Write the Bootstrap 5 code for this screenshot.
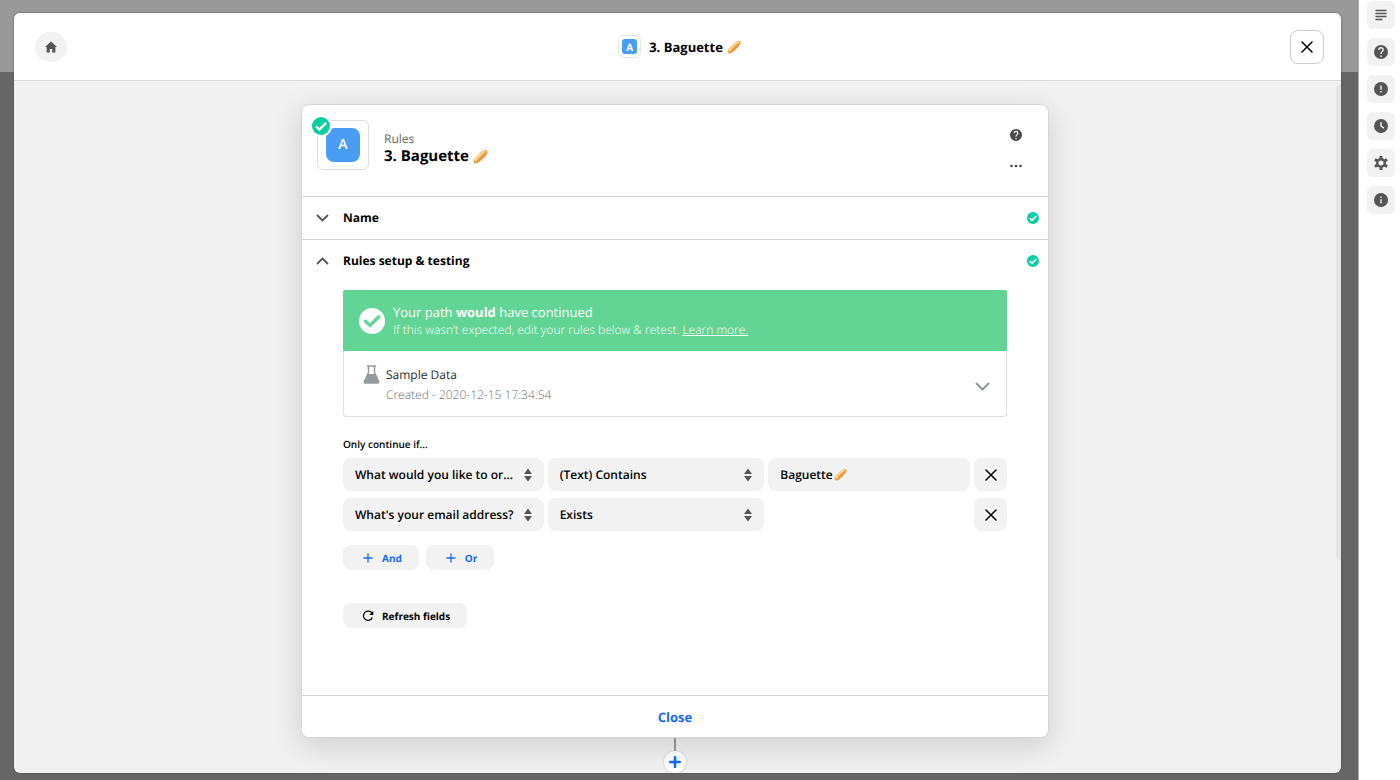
<!DOCTYPE html>
<html lang="en">
<head>
<meta charset="utf-8">
<meta name="viewport" content="width=device-width, initial-scale=1">
<title>3. Baguette – Rules</title>
<link href="https://cdn.jsdelivr.net/npm/bootstrap@5.3.0/dist/css/bootstrap.min.css" rel="stylesheet">
<style>
  body { font-family: "Open Sans", sans-serif; font-size: 12px; line-height: 18px; color: #000; background: #fff; text-rendering: geometricPrecision; }
  button, select, input { text-rendering: inherit; }
  svg { display: block; flex: none; }
  .btn { --bs-btn-font-family: inherit; --bs-btn-border-width: 0; }
  .backdrop-area { padding: 13px 17px 7px 14px; background: linear-gradient(#999 72px, #666 72px); border-right: 1px solid #aaa; min-width: 0; }
  .editor { background: #f1f1f1; border-radius: 6px; box-shadow: 0 0 2px #444; overflow: hidden; }
  .editor-head { height: 68px; padding: 0 17px 0 21px; background: #fff; border-bottom: 1px solid #d9d9d9; }
  .head-side { flex: 1 1 0; }
  .home-btn { width: 32px; height: 30px; padding: 0; border-radius: 15px; background: #f2f2f2; color: #555; }
  .app-mini { width: 23px; height: 23px; border: 1px solid #e6e6e6; border-radius: 6px; }
  .app-mini span { width: 15px; height: 15px; border-radius: 3px; background: #499df3; color: #fff; font-size: 10px; font-weight: 700; }
  .head-title { font-size: 13px; font-weight: 700; line-height: 20px; margin: 0; }
  .close-btn { width: 34px; height: 34px; padding: 0; border: 1px solid #ccc; border-radius: 8px; background: #fff; }
  .canvas-body { padding-top: 23px; min-width: 0; }
  .scroll-thumb { width: 5px; height: 475px; margin-top: 4px; background: #e5e5e5; border-radius: 3px 0 0 3px; flex: none; }
  .step { width: 100%; max-width: 748px; border: 1px solid #d6d6d6; border-radius: 8px; box-shadow: 0 8px 30px rgba(0,0,0,.15); --bs-card-bg: #fff; color: #000; }
  .step-head { height: 92px; padding: 15px; border-bottom: 1px solid #d6d6d6; }
  .app-box { width: 52px; height: 50px; border: 1px solid #ddd; border-radius: 6px; }
  .app-logo { width: 34px; height: 34px; border-radius: 8px; background: #499df3; color: #fff; font-size: 14px; font-weight: 600; }
  .app-done { position: absolute; left: -8px; top: -6px; }
  .step-names { padding: 11px 0 0 15px; }
  .step-kind { color: #666; line-height: 16px; }
  .step-title { font-size: 15px; line-height: 18px; font-weight: 700; margin: 0; }
  .step-tools { padding: 9px 11px 0 0; gap: 19px; color: #4a4a4a; }
  .step-tools .btn { padding: 0; color: #4a4a4a; }
  .fold { height: 42px; width: 100%; padding: 0 9px 0 14px; border: 0; background: none; font-weight: 700; color: #000; text-align: left; }
  .fold-line { height: 43px; border-bottom: 1px solid #d6d6d6; }
  .fold-label { margin-left: 14px; }
  .setup { padding: 8px 41px 67px; }
  .result { height: 61px; padding: 0 16px; background: #62d493; color: #fff; border-radius: 2px 2px 0 0; gap: 8px; }
  .result-title { font-size: 13px; font-weight: 500; }
  .result-title b { font-weight: 700; }
  .result-note { font-weight: 300; }
  .result-note a { color: #fff; }
  .sample { height: 66px; padding: 14px 16px 0 19px; border: 1px solid #dde1e3; border-top: 0; border-radius: 0 0 4px 4px; gap: 6px; }
  .sample-name { font-weight: 500; color: #1f2d33; line-height: 20px; }
  .sample-date { font-weight: 300; color: #5f6b70; line-height: 20px; }
  .sample-toggle { padding: 0; margin: 17px 0 0; color: #899196; }
  .only-if { font-size: 10px; font-weight: 600; margin: 18px 0 5px; }
  .rule { display: grid; grid-template-columns: 201fr 217fr 202fr 33px; gap: 4px; margin-bottom: 7px; }
  .rule .field { height: 33px; width: 100%; min-width: 0; padding: 0 30px 0 12px; border: 0; border-radius: 8px; background-color: #f2f2f2; font-size: 12px; font-weight: 600; line-height: 18px; color: #000; }
  .rule select.field { background-image: url("data:image/svg+xml,%3Csvg xmlns='http://www.w3.org/2000/svg' width='8' height='14' viewBox='0 0 8 14'%3E%3Cpath fill='%23555' d='M4 .5 8 6H0zM4 13.500 0 8h8z'/%3E%3C/svg%3E"); background-repeat: no-repeat; background-position: right 12px center; background-size: 8px 14px; }
  .field-emoji { position: absolute; left: 66px; top: 10px; pointer-events: none; }
  .rule-x { grid-column: 4; height: 33px; padding: 0; border-radius: 8px; background: #f2f2f2; }
  .pill { height: 25px; padding: 0 17px 0 19px; gap: 8px; border-radius: 8px; background: #f2f2f2; color: #000; font-size: 10px; font-weight: 700; line-height: 18px; }
  .pill-blue { color: #136bf5; }
  .pill-row { gap: 7px; margin: 14px 0 33px; }
  .step-foot { height: 42px; border: 0; border-top: 1px solid #d6d6d6; background: none; color: #136bf5; font-size: 13px; font-weight: 700; border-radius: 0 0 8px 8px; }
  .wire { width: 2px; height: 13px; background: #999; }
  .add-step { width: 22px; height: 22px; padding: 0; border-radius: 50%; background: #fff; color: #136bf5; box-shadow: 0 0 2px #bbb; }
  .rail { width: 41px; padding: 1px 0 0 2px; gap: 9px; }
  .rail .btn { width: 28px; height: 28px; padding: 0; border-radius: 6px; background: #f2f2f2; color: #555; }
</style>
</head>
<body>
<svg width="0" height="0" class="position-absolute" aria-hidden="true">
  <defs>
    <linearGradient id="crust" x1="0" y1="0" x2="1" y2="1"><stop offset="0" stop-color="#fbc45c"/><stop offset=".5" stop-color="#f3a545"/><stop offset="1" stop-color="#b9591a"/></linearGradient>
    <symbol id="baguette" viewBox="0 0 16 16">
      <path d="M1.200 14.800C.100 13.500.600 11.500 3.200 8.700 6.200 5.400 9.700 2 12.200 1.100c2.200-.6 3.900 1.100 3 3.300-1.100 2.700-4.600 6-7.500 8.400-2.700 2.400-5.400 3.200-6.500 2z" fill="url(#crust)"/>
      <path d="M3 11.800c1-2.300 7-8.200 9.600-9" stroke="#fde0a0" stroke-width="2" stroke-linecap="round" fill="none"/>
      <path d="m5 8.500 1.600 1.800M8 5.600l1.600 1.800M10.900 3.200l1.500 1.700" stroke="#f0a040" stroke-width=".8" fill="none"/>
    </symbol>
    <symbol id="ok" viewBox="0 0 20 20"><circle cx="10" cy="10" r="10" fill="#0ccda3"/><path d="m4.500 10.300 3.700 3.600L15.600 6.600" fill="none" stroke="#fff" stroke-width="2.600"/></symbol>
    <symbol id="cross" viewBox="0 0 12 12"><path d="m1 1 10 10M11 1 1 11" stroke="#000" stroke-width="1.500" fill="none" stroke-linecap="round"/></symbol>
    <symbol id="help" viewBox="2 2 20 20"><path fill="currentColor" d="M12 2a10 10 0 1 0 0 20 10 10 0 0 0 0-20zm1 17h-2v-2h2v2zm2.070-7.750-.9.920C13.450 12.900 13 13.500 13 15h-2v-.5c0-1.100.45-2.100 1.170-2.830l1.240-1.260c.37-.36.590-.86.590-1.410a2 2 0 1 0-4 0H8a4 4 0 1 1 8 0c0 .88-.36 1.680-.93 2.250z"/></symbol>
  </defs>
</svg>

<div class="d-flex min-vh-100">
  <div class="backdrop-area d-flex flex-grow-1">
    <main class="editor d-flex flex-column flex-grow-1">
      <header class="editor-head d-flex align-items-center">
        <div class="head-side">
          <button class="btn home-btn d-flex align-items-center justify-content-center" type="button" aria-label="Home">
            <svg width="12" height="12" viewBox="0 0 12 12"><path fill="currentColor" d="M6 .5 0 6h1.600v5.500h3.200V8h2.400v3.500h3.200V6H12z"/></svg>
          </button>
        </div>
        <div class="d-flex align-items-center">
          <div class="app-mini d-flex align-items-center justify-content-center me-1"><span class="d-flex align-items-center justify-content-center">A</span></div>
          <h1 class="head-title d-flex align-items-center gap-1 ms-1">3. Baguette <svg width="14" height="14"><use href="#baguette"/></svg></h1>
        </div>
        <div class="head-side d-flex justify-content-end">
          <button class="btn close-btn d-flex align-items-center justify-content-center" type="button" aria-label="Close editor"><svg width="12" height="12"><use href="#cross"/></svg></button>
        </div>
      </header>

      <div class="d-flex flex-grow-1">
        <div class="canvas-body d-flex flex-column align-items-center flex-grow-1">
          <section class="card step">
            <div class="step-head d-flex align-items-start">
              <div class="app-box position-relative d-flex align-items-center justify-content-center">
                <div class="app-logo d-flex align-items-center justify-content-center">A</div>
                <svg class="app-done" width="22" height="22" viewBox="0 0 22 22"><circle cx="11" cy="11" r="11" fill="#fff"/><use href="#ok" x="2" y="2" width="18" height="18"/></svg>
              </div>
              <div class="step-names flex-grow-1">
                <div class="step-kind">Rules</div>
                <h2 class="step-title d-flex align-items-center gap-1">3. Baguette <svg width="15" height="15"><use href="#baguette"/></svg></h2>
              </div>
              <div class="step-tools d-flex flex-column">
                <button class="btn" type="button" aria-label="Help"><svg width="12" height="12"><use href="#help"/></svg></button>
                <button class="btn" type="button" aria-label="More"><svg width="12" height="12" viewBox="0 0 12 12" fill="currentColor"><circle cx="1.500" cy="6" r="1.300"/><circle cx="6" cy="6" r="1.300"/><circle cx="10.500" cy="6" r="1.300"/></svg></button>
              </div>
            </div>

            <div class="fold-line">
              <button class="fold d-flex align-items-center" type="button">
                <svg width="13" height="8" viewBox="0 0 13 8"><path d="m1 1 5.500 5.500L12 1" fill="none" stroke="#555" stroke-width="1.800"/></svg>
                <span class="fold-label flex-grow-1">Name</span>
                <svg width="12" height="12"><use href="#ok"/></svg>
              </button>
            </div>
            <button class="fold d-flex align-items-center" type="button" aria-expanded="true">
              <svg width="13" height="8" viewBox="0 0 13 8"><path d="m1 7 5.500-5.500L12 7" fill="none" stroke="#555" stroke-width="1.800"/></svg>
              <span class="fold-label flex-grow-1">Rules setup &amp; testing</span>
              <svg width="12" height="12"><use href="#ok"/></svg>
            </button>

            <div class="setup">
              <div class="result d-flex align-items-center">
                <svg width="26" height="26" viewBox="0 0 26 26"><circle cx="13" cy="13" r="13" fill="#fff"/><path d="m6.500 13.200 4.600 4.300 8.600-8.700" fill="none" stroke="#62d493" stroke-width="3.400" stroke-linecap="round"/></svg>
                <div>
                  <div class="result-title">Your path <b>would</b> have continued</div>
                  <div class="result-note">If this wasn’t expected, edit your rules below &amp; retest. <a href="#learn">Learn more.</a></div>
                </div>
              </div>
              <div class="sample d-flex align-items-start">
                <svg width="17" height="19" viewBox="0 0 17 19"><path d="M4 1h9M5.500 1v6.500L1.500 16q-.8 2 1.200 2h11.600q2 0 1.200-2l-4-8.500V1" fill="none" stroke="#959c9f" stroke-width="1.500"/><path d="M4.600 9h7.800l3.100 7.500q.3 1.500-1.200 1.500H2.700q-1.500 0-1.200-1.500z" fill="#959c9f"/></svg>
                <div class="flex-grow-1">
                  <div class="sample-name">Sample Data</div>
                  <div class="sample-date">Created - 2020-12-15 17:34:54</div>
                </div>
                <button class="btn sample-toggle" type="button" aria-label="Show sample data"><svg width="15" height="9" viewBox="0 0 15 9"><path d="m1.500 1.500 6 6 6-6" fill="none" stroke="currentColor" stroke-width="1.800" stroke-linecap="round"/></svg></button>
              </div>

              <p class="only-if">Only continue if...</p>
              <div class="rule">
                <select class="form-select field" aria-label="Field"><option>What would you like to or...</option></select>
                <select class="form-select field" aria-label="Condition"><option>(Text) Contains</option></select>
                <div class="position-relative">
                  <input class="form-control field" type="text" value="Baguette" aria-label="Value">
                  <svg class="field-emoji" width="13" height="13"><use href="#baguette"/></svg>
                </div>
                <button class="btn rule-x d-flex align-items-center justify-content-center" type="button" aria-label="Remove rule"><svg width="12" height="12"><use href="#cross"/></svg></button>
              </div>
              <div class="rule">
                <select class="form-select field" aria-label="Field"><option>What's your email address?</option></select>
                <select class="form-select field" aria-label="Condition"><option>Exists</option></select>
                <button class="btn rule-x d-flex align-items-center justify-content-center" type="button" aria-label="Remove rule"><svg width="12" height="12"><use href="#cross"/></svg></button>
              </div>

              <div class="pill-row d-flex">
                <button class="btn pill pill-blue d-flex align-items-center" type="button"><svg width="12" height="10" viewBox="0 0 12 10"><path d="M6 .5v9M1.500 5h9" stroke="currentColor" stroke-width="1.300"/></svg>And</button>
                <button class="btn pill pill-blue d-flex align-items-center" type="button"><svg width="12" height="10" viewBox="0 0 12 10"><path d="M6 .5v9M1.500 5h9" stroke="currentColor" stroke-width="1.300"/></svg>Or</button>
              </div>
              <button class="btn pill d-flex align-items-center" type="button"><svg width="12" height="12" viewBox="0 0 12 12"><path d="M10 3.400A4.600 4.600 0 1 0 10.300 7.500" fill="none" stroke="#000" stroke-width="1.300"/><path d="M11.300 1v4H7.300z"/></svg>Refresh fields</button>
            </div>
            <button class="step-foot" type="button">Close</button>
          </section>
          <div class="wire"></div>
          <button class="btn add-step d-flex align-items-center justify-content-center" type="button" aria-label="Add step"><svg width="12" height="12" viewBox="0 0 12 12"><path d="M6 1.200v9.600M1.200 6h9.600" stroke="currentColor" stroke-width="2.600" stroke-linecap="round"/></svg></button>
        </div>
        <div class="scroll-thumb"></div>
      </div>
    </main>
  </div>

  <nav class="rail d-flex flex-column align-items-center flex-shrink-0" aria-label="Tools">
    <button class="btn d-flex align-items-center justify-content-center" type="button" aria-label="Notes"><svg width="12" height="12" viewBox="0 0 12 12"><path d="M.5 1.500h11M.5 4.500h11M.5 7.500h11M.5 10.500h7" stroke="currentColor" stroke-width="1.300"/></svg></button>
    <button class="btn d-flex align-items-center justify-content-center" type="button" aria-label="Help"><svg width="14" height="14"><use href="#help"/></svg></button>
    <button class="btn d-flex align-items-center justify-content-center" type="button" aria-label="Alerts"><svg width="14" height="14" viewBox="2 2 20 20"><path fill="currentColor" d="M12 2a10 10 0 1 0 0 20 10 10 0 0 0 0-20zm1 15h-2v-2h2v2zm0-4h-2V7h2v6z"/></svg></button>
    <button class="btn d-flex align-items-center justify-content-center" type="button" aria-label="History"><svg width="14" height="14" viewBox="2 2 20 20"><circle cx="12" cy="12" r="10" fill="currentColor"/><path d="M12 6.500V12l4 3" fill="none" stroke="#fff" stroke-width="2"/></svg></button>
    <button class="btn d-flex align-items-center justify-content-center" type="button" aria-label="Settings"><svg width="14" height="14" viewBox="2 2 20 20"><circle cx="12" cy="12" r="5.300" fill="none" stroke="currentColor" stroke-width="3.400"/><path d="M12 2v4M12 18v4M3.300 7l3.500 2M17.200 15l3.500 2M3.300 17l3.500-2M17.200 9l3.500-2" stroke="currentColor" stroke-width="4.200"/></svg></button>
    <button class="btn d-flex align-items-center justify-content-center" type="button" aria-label="Info"><svg width="14" height="14" viewBox="2 2 20 20"><path fill="currentColor" d="M12 2a10 10 0 1 0 0 20 10 10 0 0 0 0-20zm1 15h-2v-6h2v6zm0-8h-2V7h2v2z"/></svg></button>
  </nav>
</div>
<script src="https://cdn.jsdelivr.net/npm/bootstrap@5.3.0/dist/js/bootstrap.bundle.min.js"></script>
</body>
</html>
